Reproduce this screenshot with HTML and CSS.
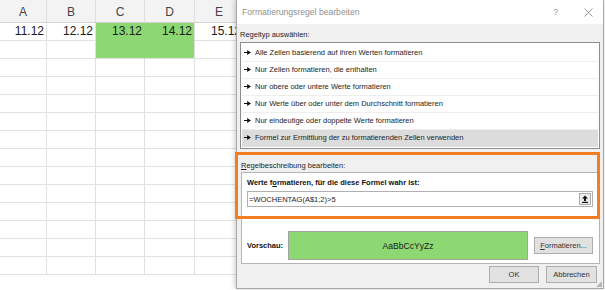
FILE: index.html
```html
<!DOCTYPE html>
<html lang="de">
<head>
    <meta charset="UTF-8">
    <title>Formatierungsregel bearbeiten</title>
    <link rel="stylesheet" href="styles.css">
</head>
<body>
    <!-- spreadsheet behind the dialog -->
    <div class="sheet">
        <div class="hd">A</div><div class="hd">B</div><div class="hd">C</div><div class="hd">D</div><div class="hd">E</div><div class="hd"></div><div class="hd"></div>
        <div class="c">11.12</div><div class="c">12.12</div><div class="c fill fill-c fill-top">13.12</div><div class="c fill fill-top">14.12</div><div class="c">15.12</div><div class="c"></div><div class="c"></div>
        <div class="c"></div><div class="c"></div><div class="c fill fill-c"></div><div class="c fill"></div><div class="c"></div><div class="c"></div><div class="c"></div>
        <div class="c"></div><div class="c"></div><div class="c"></div><div class="c"></div><div class="c"></div><div class="c"></div><div class="c"></div>
        <div class="c"></div><div class="c"></div><div class="c"></div><div class="c"></div><div class="c"></div><div class="c"></div><div class="c"></div>
        <div class="c"></div><div class="c"></div><div class="c"></div><div class="c"></div><div class="c"></div><div class="c"></div><div class="c"></div>
        <div class="c"></div><div class="c"></div><div class="c"></div><div class="c"></div><div class="c"></div><div class="c"></div><div class="c"></div>
        <div class="c"></div><div class="c"></div><div class="c"></div><div class="c"></div><div class="c"></div><div class="c"></div><div class="c"></div>
        <div class="c"></div><div class="c"></div><div class="c"></div><div class="c"></div><div class="c"></div><div class="c"></div><div class="c"></div>
        <div class="c"></div><div class="c"></div><div class="c"></div><div class="c"></div><div class="c"></div><div class="c"></div><div class="c"></div>
        <div class="c"></div><div class="c"></div><div class="c"></div><div class="c"></div><div class="c"></div><div class="c"></div><div class="c"></div>
        <div class="c"></div><div class="c"></div><div class="c"></div><div class="c"></div><div class="c"></div><div class="c"></div><div class="c"></div>
        <div class="c"></div><div class="c"></div><div class="c"></div><div class="c"></div><div class="c"></div><div class="c"></div><div class="c"></div>
        <div class="c"></div><div class="c"></div><div class="c"></div><div class="c"></div><div class="c"></div><div class="c"></div><div class="c"></div>
        <div class="c"></div><div class="c"></div><div class="c"></div><div class="c"></div><div class="c"></div><div class="c"></div><div class="c"></div>
    </div>

    <!-- the dialog window -->
    <div class="dialog">
        <div class="titlebar">
            <span class="title">Formatierungsregel bearbeiten</span>
            <span class="help">?</span>
            <svg class="close" width="9" height="9" viewBox="0 0 9 9">
                <path d="M0.5 0.5L8.5 8.5M8.5 0.5L0.5 8.5" stroke="#8a8a8a" stroke-width="0.9" fill="none"/>
            </svg>
        </div>
        <div class="dlg-body">
            <div class="label">Regeltyp auswählen:</div>
            <ul class="rule-list">
                <li>Alle Zellen basierend auf ihren Werten formatieren</li>
                <li>Nur Zellen formatieren, die enthalten</li>
                <li>Nur obere oder untere Werte formatieren</li>
                <li>Nur Werte über oder unter dem Durchschnitt formatieren</li>
                <li>Nur eindeutige oder doppelte Werte formatieren</li>
                <li class="selected">Formel zur Ermittlung der zu formatierenden Zellen verwenden</li>
            </ul>
            <div class="label label-desc"><u>R</u>egelbeschreibung bearbeiten:</div>
            <div class="desc-panel">
                <div class="desc-title">Werte f<u>o</u>rmatieren, für die diese Formel wahr ist:</div>
                <div class="formula">
                    <span class="formula-text">=WOCHENTAG(A$1;2)&gt;5</span>
                    <span class="ref-btn">
                        <svg width="8" height="8" viewBox="0 0 8 8">
                            <path d="M4 0.5L7 3.5H5V6H3V3.5H1Z" fill="#111"/>
                            <rect x="1" y="6.8" width="6" height="1.2" fill="#111"/>
                        </svg>
                    </span>
                </div>
                <div class="preview-row">
                    <span class="preview-label">Vorschau:</span>
                    <div class="preview">AaBbCcYyZz</div>
                    <button class="btn btn-format"><u>F</u>ormatieren...</button>
                </div>
            </div>
            <div class="actions">
                <button class="btn btn-ok">OK</button>
                <button class="btn btn-cancel">Abbrechen</button>
            </div>
        </div>
        <span class="grip"></span>
    </div>

    <!-- orange annotation frame -->
    <div class="highlight"></div>
</body>
</html>
```

FILE: styles.css
```css
* {
    margin: 0;
    padding: 0;
    box-sizing: border-box;
}

body {
    width: 605px;
    height: 290px;
    position: relative;
    overflow: hidden;
    background-color: #fff;
    font-family: 'Liberation Sans', Arial, sans-serif;
}

/* ---------- spreadsheet ---------- */

.sheet {
    display: grid;
    grid-template-columns: 47px 49px 49px 50px 49px 49px 49px;
    grid-template-rows: 23px repeat(14, 18px);
    width: 342px;
}

.hd {
    background-color: #f3f3f3;
    border-right: 1px solid #dedede;
    border-bottom: 1px solid #d2d2d2;
    color: #444;
    font-size: 12px;
    text-align: center;
    padding-top: 5px;
}

.c {
    border-right: 1px solid #e1e1e1;
    border-bottom: 1px solid #e1e1e1;
    color: #1a1a1a;
    font-size: 12px;
    line-height: 17px;
    text-align: right;
    padding-right: 2px;
    white-space: nowrap;
}

.fill {
    background-color: #8ed873;
}

.fill-c {
    border-right-color: #8ed873;
}

.fill-top {
    border-bottom-color: #8ed873;
}

/* ---------- dialog ---------- */

.dialog {
    position: absolute;
    left: 236px;
    top: -1px;
    width: 368px;
    height: 290px;
    background-color: #f0f0f0;
    border: 1px solid #a9a9a9;
    box-shadow: -1px 0 5px rgba(0, 0, 0, 0.22);
    display: flex;
    flex-direction: column;
}

.titlebar {
    height: 24px;
    background-color: #fff;
    display: flex;
    align-items: center;
    padding-left: 5px;
    padding-right: 10px;
    flex-shrink: 0;
}

.title {
    font-size: 8.6px;
    color: #8f8f8f;
    flex: 1;
}

.help {
    font-size: 8.5px;
    color: #8f8f8f;
    margin-right: 26px;
}

.close {
    display: block;
}

.dlg-body {
    flex: 1;
    padding: 0 3px;
    font-size: 7.5px;
    color: #1e1e1e;
    display: flex;
    flex-direction: column;
}

.label {
    line-height: 10px;
    margin-top: 6px;
    margin-bottom: 2px;
}

.label-desc {
    margin-top: 12px;
    margin-bottom: 1px;
    margin-left: 1px;
}

.rule-list {
    list-style: none;
    background-color: #fff;
    border: 1px solid #8c8c8c;
    padding: 2px 1px 1px 1px;
}

.rule-list li {
    height: 17px;
    line-height: 16px;
    padding-left: 2px;
    border-bottom: 1px solid #eeeeee;
}

.rule-list li::before {
    content: "";
    display: inline-block;
    width: 7px;
    height: 5px;
    margin-right: 4px;
    vertical-align: 0;
    background-color: #111;
    clip-path: polygon(0 38%, 45% 38%, 45% 0, 100% 50%, 45% 100%, 45% 62%, 0 62%);
}

.rule-list li.selected {
    background-color: #dcdcdc;
    border-bottom: none;
}

.desc-panel {
    margin-left: 1px;
    background-color: #fff;
    border: 1px solid #b5b5b5;
    padding: 5px 6px 3px 5px;
}

.desc-title {
    font-weight: bold;
    line-height: 10px;
    color: #111;
}

.formula {
    margin-top: 3px;
    height: 16px;
    border: 1px solid #b0b0b0;
    display: flex;
    align-items: center;
    padding-left: 1px;
    padding-right: 1px;
}

.formula-text {
    flex: 1;
    color: #222;
}

.ref-btn {
    width: 12px;
    height: 12px;
    border: 1px solid #adadad;
    background-color: #ececec;
    display: flex;
    align-items: center;
    justify-content: center;
}

.ref-btn svg {
    display: block;
}

.preview-row {
    display: flex;
    align-items: center;
    margin-top: 24px;
}

.preview-label {
    width: 41px;
    font-weight: bold;
    color: #111;
}

.preview {
    width: 240px;
    height: 29px;
    background-color: #8ed873;
    border: 1px solid #a3a3a3;
    display: flex;
    align-items: center;
    justify-content: center;
    font-size: 8.6px;
    color: #1a1a1a;
}

.btn {
    height: 17px;
    background-color: #e1e1e1;
    border: 1px solid #adadad;
    font-family: 'Liberation Sans', Arial, sans-serif;
    font-size: 7.5px;
    color: #333;
}

.btn-format {
    width: 59px;
    margin-left: 6px;
}

.actions {
    display: flex;
    justify-content: flex-end;
    gap: 7px;
    margin-top: 2px;
    margin-right: 3px;
}

.btn-ok {
    width: 50px;
}

.btn-cancel {
    width: 51px;
}

.grip {
    position: absolute;
    right: 1px;
    bottom: 1px;
    width: 6px;
    height: 6px;
    background-image: radial-gradient(circle, #b5b5b5 0.7px, transparent 0.9px);
    background-size: 2px 2px;
    clip-path: polygon(100% 0, 100% 100%, 0 100%);
}

/* ---------- annotation ---------- */

.highlight {
    position: absolute;
    left: 235px;
    top: 152px;
    width: 365px;
    height: 67px;
    border: 3px solid #f27d22;
}
```
